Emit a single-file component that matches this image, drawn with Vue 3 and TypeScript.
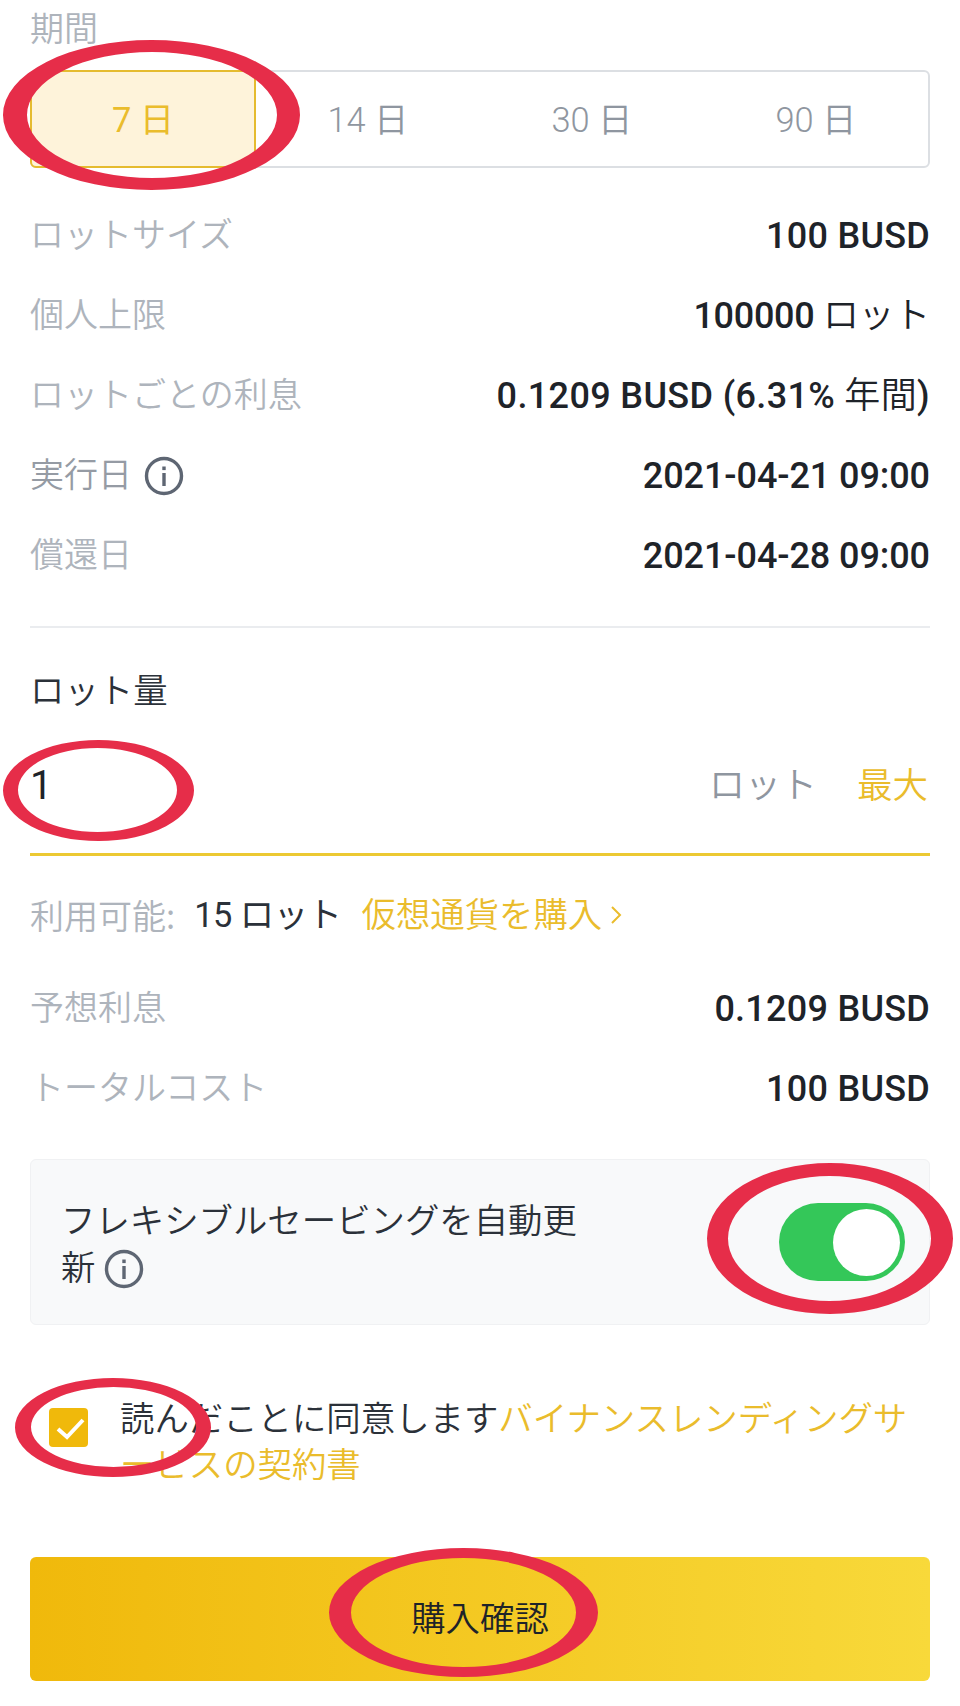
<script setup lang="ts">
const days = ['7 日', '14 日', '30 日', '90 日']
const rows = [
  { label: 'ロットサイズ', value: '100 BUSD', fit: 'wide' },
  { label: '個人上限', value: '100000', unit: ' ロット', fit: 'tight' },
  { label: 'ロットごとの利息', value: '0.1209 BUSD (6.31%', unit: ' 年間', end: ')', fit: 'wider' },
  { label: '実行日', value: '2021-04-21 09:00', info: true, fit: 'date' },
  { label: '償還日', value: '2021-04-28 09:00', fit: 'date' },
]
const summary = [
  { label: '予想利息', value: '0.1209 BUSD' },
  { label: 'トータルコスト', value: '100 BUSD' },
]
// outer and inner ellipse of each hand-drawn ring: cx, cy, rx, ry
const rings = [
  [[151.5, 115, 148.5, 75], [152, 115, 125, 63]],
  [[98.5, 790.5, 95.5, 50.5], [97.5, 790, 79.5, 42]],
  [[830, 1238.5, 123, 75.5], [829.5, 1238.5, 101.5, 62.5]],
  [[113, 1427.5, 98, 49.5], [113.5, 1427, 82.5, 40]],
  [[463.5, 1612.5, 134.5, 64.5], [463.5, 1612.5, 112.5, 54.5]],
]
const ringPath = rings
  .map((pair) =>
    pair
      .map(([cx, cy, rx, ry]) => `M${cx - rx} ${cy}a${rx} ${ry} 0 1 0 ${2 * rx} 0a${rx} ${ry} 0 1 0 ${-2 * rx} 0z`)
      .join(''),
  )
  .join('')
</script>

<template>
  <div class="page">
    <div class="label title">期間</div>
    <div class="segments">
      <div v-for="(d, i) in days" :key="d" class="segment" :class="{ active: i === 0 }">{{ d }}</div>
    </div>

    <div class="rows">
      <div v-for="r in rows" :key="r.label" class="row">
        <span class="with-icon">
          <span class="label lift" :class="{ strong: r.info }">{{ r.label }}</span>
          <svg v-if="r.info" class="info" viewBox="0 0 40 40">
            <circle cx="20" cy="20" r="17.5" fill="none" stroke="#5e6673" stroke-width="3.4" />
            <rect x="18.3" y="17" width="3.4" height="13" fill="#5e6673" />
            <rect x="18.3" y="10.5" width="3.4" height="3.6" fill="#5e6673" />
          </svg>
        </span>
        <span class="value" :class="r.fit">{{ r.value }}<span v-if="r.unit" class="value-unit">{{ r.unit }}</span>{{ r.end }}</span>
      </div>
    </div>

    <div class="divider"></div>

    <div class="dark amount-title">ロット量</div>
    <div class="input-row">
      <span class="input-value">1</span>
      <span class="unit">ロット</span>
      <span class="gold max">最大</span>
    </div>

    <div class="available">
      <span class="label">利用可能:</span>
      <span class="dark avail-value">15 ロット</span>
      <span class="gold buy">仮想通貨を購入</span>
      <svg class="chev" viewBox="0 0 12 20"><path d="M2 2l8 8-8 8" fill="none" stroke="#eabc2c" stroke-width="2" /></svg>
    </div>

    <div class="summary">
      <div v-for="r in summary" :key="r.label" class="row">
        <span class="label lift">{{ r.label }}</span>
        <span class="value wide">{{ r.value }}</span>
      </div>
    </div>

    <div class="card">
      <div class="card-text dark">
        フレキシブルセービングを自動更新
        <svg class="info inline" viewBox="0 0 40 40">
          <circle cx="20" cy="20" r="17.5" fill="none" stroke="#5e6673" stroke-width="3.4" />
          <rect x="18.3" y="17" width="3.4" height="13" fill="#5e6673" />
          <rect x="18.3" y="10.5" width="3.4" height="3.6" fill="#5e6673" />
        </svg>
      </div>
      <div class="toggle"><div class="knob"></div></div>
    </div>

    <div class="agree">
      <div class="checkbox">
        <svg viewBox="0 0 39 39"><path d="M9 21l9 8L34 12" fill="none" stroke="#fff" stroke-width="4" /></svg>
      </div>
      <div class="agree-text dark">読んだことに同意します<span class="gold">バイナンスレンディングサービスの契約書</span></div>
    </div>

    <div class="confirm">購入確認</div>

    <svg class="rings" viewBox="0 0 960 1706" width="960" height="1706">
      <path :d="ringPath" fill="#e62d49" fill-rule="evenodd" />
    </svg>
  </div>
</template>

<style>
body {
  margin: 0;
  background: #fff;
}
</style>

<style scoped>
.page {
  position: relative;
  width: 960px;
  height: 1706px;
  box-sizing: border-box;
  padding: 0 30px;
  overflow: hidden;
  background: #fff;
  font-family: Roboto, "Noto Sans CJK JP", sans-serif;
  font-size: 34.4px;
  font-weight: 350;
  line-height: 56px;
}
.label {
  color: #aeb4bc;
  font-family: "Noto Sans CJK JP", sans-serif;
  font-size: 34px;
  font-weight: 350;
}
.label.strong {
  color: #959ba4;
}
.lift {
  padding-bottom: 6px;
}
.title {
  margin-top: -1px;
}
.dark {
  color: #2b3139;
}
.gold {
  color: #eabc2c;
}
.segments {
  display: grid;
  grid-template-columns: repeat(4, 1fr);
  height: 98px;
  margin-top: 15px;
  box-sizing: border-box;
  border: 2px solid #dcdfe3;
  border-radius: 6px;
}
.segment {
  display: flex;
  align-items: center;
  justify-content: center;
  padding-top: 2px;
  color: #8f96a0;
}
.segment.active {
  margin: -2px 0 -2px -2px;
  border: 2px solid #e5bb2f;
  border-radius: 6px 0 0 6px;
  background: #fef3da;
  color: #eabc2c;
  font-weight: 400;
}
.rows {
  margin-top: 28px;
}
.row {
  display: flex;
  align-items: center;
  justify-content: space-between;
  height: 80px;
}
.with-icon {
  display: flex;
  align-items: center;
  gap: 12px;
}
.value {
  color: #1e2329;
  font-size: 36px;
  font-weight: 500;
}
.value-unit {
  font-weight: 350;
}
.wide {
  letter-spacing: 0.25px;
}
.wider {
  letter-spacing: 0.36px;
}
.tight {
  letter-spacing: -0.3px;
}
.date {
  letter-spacing: -0.08px;
}
.info {
  flex: none;
  width: 40px;
  height: 40px;
}
.info.inline {
  vertical-align: -9px;
}
.divider {
  height: 2px;
  margin-top: 30px;
  background: #eaecef;
}
.amount-title {
  margin-top: 32px;
  font-family: "Noto Sans CJK JP", sans-serif;
}
.input-row {
  display: flex;
  align-items: center;
  height: 80px;
  margin-top: 30px;
  padding: 0 2px 27px 0;
  border-bottom: 3px solid #ecc932;
}
.input-value {
  flex: 1;
  color: #1e2329;
  font-size: 40px;
  font-weight: 400;
}
.unit {
  color: #8f96a0;
  font-size: 36px;
}
.max {
  margin-left: 40px;
  font-size: 35.5px;
}
.available {
  display: flex;
  align-items: center;
  height: 56px;
  margin-top: 31px;
}
.avail-value {
  margin-left: 19px;
  font-weight: 400;
  letter-spacing: -0.5px;
}
.buy {
  margin-left: 20px;
}
.chev {
  width: 12px;
  height: 20px;
  margin-left: 8px;
}
.summary {
  margin-top: 26px;
}
.card {
  display: flex;
  align-items: center;
  justify-content: space-between;
  box-sizing: border-box;
  height: 166px;
  margin-top: 30px;
  padding: 0 24px 0 30px;
  border: 1px solid #f0f1f3;
  border-radius: 6px;
  background: #f8f9fa;
}
.card-text {
  width: 530px;
  padding-top: 5px;
  line-height: 47px;
}
.toggle {
  display: flex;
  align-items: center;
  justify-content: flex-end;
  box-sizing: border-box;
  width: 126px;
  height: 78px;
  padding-right: 5px;
  border-radius: 39px;
  background: #34c759;
}
.knob {
  width: 67px;
  height: 67px;
  border-radius: 50%;
  background: #fff;
}
.agree {
  display: flex;
  gap: 32px;
  margin: 71px 0 0 19px;
}
.checkbox {
  flex: none;
  width: 39px;
  height: 39px;
  margin-top: 12px;
  border-radius: 4px;
  background: #f0b90b;
}
.checkbox svg {
  display: block;
}
.agree-text {
  line-height: 46px;
}
.confirm {
  display: flex;
  align-items: center;
  justify-content: center;
  height: 124px;
  margin-top: 69px;
  border-radius: 6px;
  background: linear-gradient(90deg, #f0b90b, #f8d93a);
  color: #1e2329;
}
.rings {
  position: absolute;
  top: 0;
  left: 0;
  pointer-events: none;
}
</style>
